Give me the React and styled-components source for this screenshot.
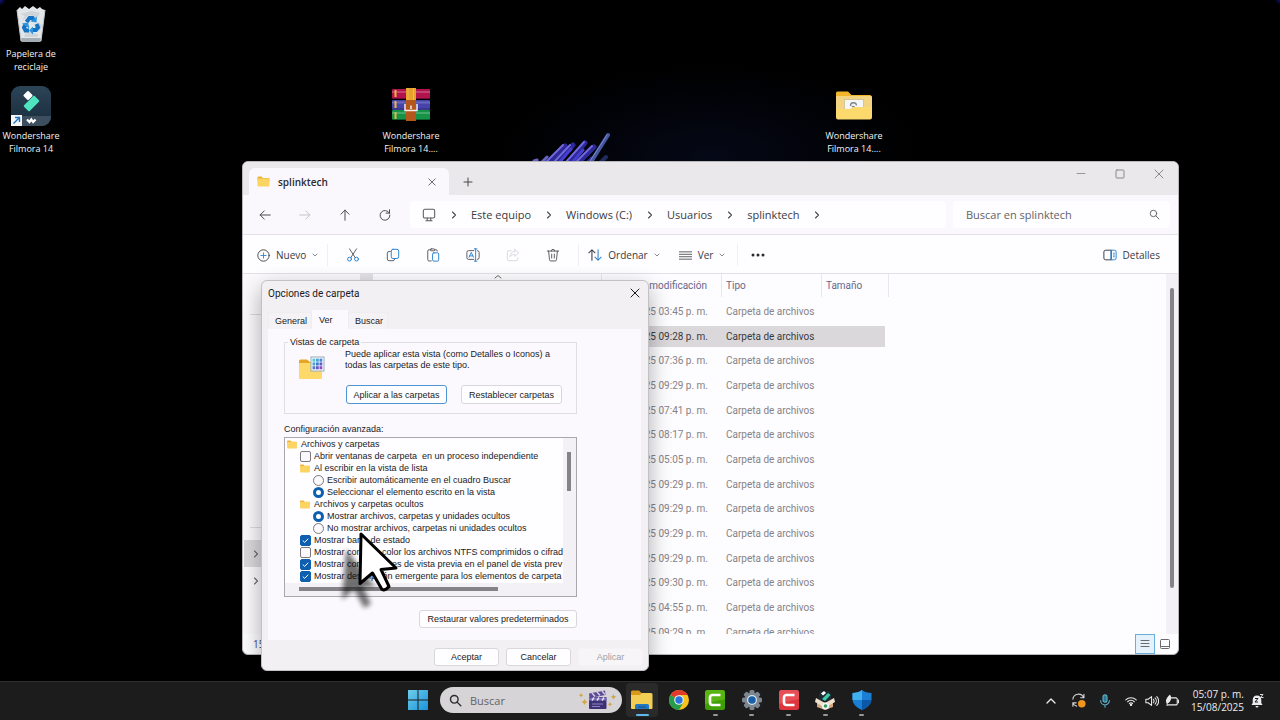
import React, { useState } from 'react';
import styled, { createGlobalStyle, css } from 'styled-components';

const ui = '"Open Sans", "Noto Sans", sans-serif';
const uiNarrow = 'Roboto, "Noto Sans", sans-serif';
const classic = '"Liberation Sans", Arial, sans-serif';

const GlobalStyle = createGlobalStyle`
  * {
    box-sizing: border-box;
  }
  body {
    margin: 0;
    background: #000;
    font-family: ${ui};
    overflow: hidden;
  }
  button, input {
    font-family: inherit;
  }
  svg {
    display: block;
    flex: none;
  }
`;

const Desktop = styled.div`
  position: relative;
  display: flex;
  flex-direction: column;
  height: 100vh;
  overflow: hidden;
  background:
    radial-gradient(circle at 0 0, #10107a 0, transparent 6px),
    radial-gradient(circle at 100% 0, #10107a 0, transparent 5px),
    radial-gradient(ellipse 210px 90px at 710px 155px, #050816 0, transparent 100%),
    #000;
`;

const Workspace = styled.main`
  position: relative;
  flex: 1;
`;

const Bloom = styled.svg`
  position: absolute;
  left: 528px;
  top: 130px;
`;

/* ---------- desktop icons ---------- */

const Shortcut = styled.a`
  position: absolute;
  left: ${(props) => props.$x}px;
  top: ${(props) => props.$y}px;
  width: 72px;
  display: flex;
  flex-direction: column;
  align-items: center;
  gap: ${(props) => props.$gap || 3}px;
  color: #f2f2f2;
  font-size: 9px;
  line-height: 13px;
  text-align: center;
  text-decoration: none;
`;

/* ---------- explorer window ---------- */

const Explorer = styled.section`
  position: absolute;
  left: 242px;
  right: 101px;
  top: 161px;
  bottom: 26px;
  display: flex;
  flex-direction: column;
  border: 1px solid #b9b7ba;
  border-radius: 6px;
  background: #fdfcfe;
  overflow: hidden;
`;

const TitleBar = styled.header`
  display: flex;
  height: 33px;
  padding: 6px 0 0 6px;
  background: #eae8eb;
`;

const ExplorerTab = styled.div`
  display: flex;
  align-items: center;
  width: 200px;
  padding: 0 11px 0 8px;
  gap: 8px;
  border-radius: 6px 6px 0 0;
  background: #faf8fc;
  color: #2b2a2d;
  font-size: 10px;
  font-weight: 600;
`;

const Spacer = styled.span`
  flex: 1;
`;

const PlainButton = styled.button`
  display: flex;
  align-items: center;
  justify-content: center;
  width: ${(props) => props.$w || 20}px;
  height: ${(props) => props.$h || 20}px;
  padding: 0;
  border: 0;
  background: none;
  color: ${(props) => props.$color || '#4a494c'};
`;

const NavBar = styled.nav`
  display: flex;
  align-items: center;
  height: 40px;
  padding: 0 8px 0 2px;
  border-bottom: 1px solid #e3e1e5;
  background: #faf8fc;
`;

const Address = styled.div`
  display: flex;
  align-items: center;
  flex: 1;
  height: 27px;
  margin-left: 5px;
  padding-left: 12px;
  border-radius: 4px;
  background: #fefdff;
  color: #5b5a5d;
`;

const Crumb = styled.a`
  color: #3b3a3d;
  font-size: 11px;
  line-height: 16px;
  text-decoration: none;
  white-space: nowrap;
`;

const CrumbGap = styled.span`
  display: flex;
  justify-content: center;
  width: 35px;
  color: #4a494c;
`;

const SearchBox = styled.label`
  display: flex;
  align-items: center;
  width: 217px;
  height: 27px;
  margin-left: 7px;
  padding: 0 10px 0 13px;
  border-radius: 4px;
  background: #fefdff;
  color: #5b5a5d;
`;

const SearchInput = styled.input`
  flex: 1;
  min-width: 0;
  padding: 0;
  border: 0;
  outline: 0;
  background: none;
  color: #5b5a5d;
  font-size: 11px;
  &::placeholder {
    color: #646366;
    opacity: 1;
  }
`;

const Toolbar = styled.div`
  display: flex;
  align-items: center;
  height: 39px;
  padding: 2px 14px 0 10px;
  border-bottom: 1px solid #e3e1e5;
  background: #fefdff;
`;

const ToolButton = styled.button`
  display: flex;
  align-items: center;
  gap: 6px;
  height: 24px;
  margin-left: ${(props) => props.$push || 0}px;
  padding: 0 4px;
  border: 0;
  background: none;
  color: #3b3a3d;
  font-size: 10px;
  white-space: nowrap;
`;

const IconTool = styled(ToolButton)`
  justify-content: center;
  width: ${(props) => props.$w || 40}px;
  padding: 0;
  color: #5b5a5d;
  &:disabled {
    color: #c9c8ce;
    opacity: 0.7;
  }
`;

const Divider = styled.span`
  width: 1px;
  height: 22px;
  margin: 0 ${(props) => props.$m}px;
  background: #f1eff3;
`;

const Body = styled.div`
  display: flex;
  flex: 1;
  min-height: 0;
`;

const Sidebar = styled.aside`
  display: flex;
  flex-direction: column;
  width: 130px;
  padding: 40px 0 0 1px;
  border-right: 13px solid #e4e2e5;
  background: #fbf9fc;
`;

const SidebarGroup = styled.div`
  height: 214px;
  margin: 0 6px;
  border-top: 1px solid #dddbde;
  border-bottom: 1px solid #dddbde;
`;

const TreeRow = styled.button`
  display: flex;
  align-items: center;
  height: 27px;
  margin-top: ${(props) => (props.$current ? 12 : 0)}px;
  padding: 0 8px;
  border: 0;
  background: ${(props) => (props.$current ? '#dad8db' : 'none')};
  color: #6b6a6d;
`;

const Files = styled.div`
  position: relative;
  flex: 1;
  min-width: 0;
  overflow: hidden;
`;

const SortMark = styled.span`
  position: absolute;
  left: 121px;
  top: -1px;
  color: #6b6a6d;
`;

const FileTable = styled.table`
  table-layout: fixed;
  width: 516px;
  border-collapse: separate;
  border-spacing: 0;
  font-family: ${uiNarrow};
  font-size: 10px;
  line-height: 12px;
`;

const HeadCell = styled.th`
  width: ${(props) => props.$w}px;
  height: 23px;
  padding: 0 4px;
  border-right: 1px solid #e9e7eb;
  color: #69678a;
  font-weight: 400;
  text-align: left;
  white-space: nowrap;
  &:nth-child(2) {
    padding: 0 14px 0 0;
    text-align: right;
  }
`;

const FileRow = styled.tr`
  height: 25px;
  color: ${(props) => (props.$selected ? '#3a393c' : '#858387')};
  &:nth-child(3n) {
    height: 24px;
  }
  td {
    padding: 0 4px;
    border-top: 2px solid transparent;
    border-bottom: 2px solid transparent;
    background: ${(props) => (props.$selected ? '#dad8db' : 'none')};
    background-clip: padding-box;
    white-space: nowrap;
  }
  td:nth-child(2) {
    padding-right: 14px;
    text-align: right;
  }
  td:last-child {
    border-right: 4px solid transparent;
  }
`;

const TableBody = styled.tbody`
  &::before {
    content: '';
    display: block;
    height: 2px;
  }
`;

const Track = styled.div`
  width: 12px;
  padding: 14px 4px;
  background: #f3f1f5;
`;

const Thumb = styled.div`
  width: 4px;
  height: 300px;
  border-radius: 2px;
  background: #858387;
`;

const StatusBar = styled.footer`
  display: flex;
  align-items: center;
  height: 20px;
  padding: 0 3px 0 10px;
  color: #4b4a70;
  font-size: 10px;
`;

const ViewToggle = styled.button`
  display: flex;
  align-items: center;
  justify-content: center;
  width: 20px;
  height: 20px;
  padding: 0;
  border: 1px solid ${(props) => (props.$active ? '#6aaede' : 'transparent')};
  background: ${(props) => (props.$active ? '#e5f2fc' : 'none')};
  color: #6b6a6d;
`;

/* ---------- folder options dialog ---------- */

const Dialog = styled.section`
  position: absolute;
  left: 261px;
  top: 280px;
  width: 388px;
  display: flex;
  flex-direction: column;
  border: 1px solid #c3c1c4;
  border-radius: 6px;
  background: #f2f0f3;
  box-shadow: 0 8px 22px rgba(0, 0, 0, 0.32);
  color: #1b1a1d;
  font-family: ${classic};
  font-size: 9px;
`;

const DialogTitle = styled.header`
  display: flex;
  align-items: center;
  justify-content: space-between;
  height: 24px;
  padding: 0 3px 0 6px;
  h2 {
    margin: 0;
    font-family: ${uiNarrow};
    font-size: 10px;
    font-weight: 400;
  }
`;

const Tabs = styled.div`
  display: flex;
  align-items: flex-end;
  height: 24px;
  padding: 0 6px;
`;

const Tab = styled.button`
  width: ${(props) => props.$w}px;
  height: ${(props) => (props.$active ? 19 : 17)}px;
  padding: 0 6px;
  border: 1px solid ${(props) => (props.$active ? '#fbf9fd' : '#efedf0')};
  border-bottom: 0;
  background: ${(props) => (props.$active ? '#fbf9fd' : '#f4f2f5')};
  color: inherit;
  font-size: 9px;
  text-align: left;
`;

const Page = styled.div`
  display: flex;
  flex-direction: column;
  height: 311px;
  margin: 0 7px 0 6px;
  padding: 7px 64px 12px 16px;
  background: #fbf9fd;
`;

const Group = styled.fieldset`
  display: flex;
  height: 78px;
  margin: 0;
  padding: 0 11px 0 13px;
  border: 1px solid #e0dee2;
  legend {
    height: 13px;
    margin-left: -10px;
    padding: 0 2px;
    line-height: 13px;
  }
`;

const GroupIcon = styled.div`
  width: 47px;
  padding-top: 7px;
`;

const GroupText = styled.p`
  margin: 0 0 14px;
  line-height: 11px;
`;

const Row = styled.div`
  display: flex;
  justify-content: ${(props) => (props.$end ? 'flex-end' : 'flex-start')};
  gap: 14px;
  padding-left: 1px;
`;

const Button = styled.button`
  width: ${(props) => props.$w}px;
  height: ${(props) => props.$h || 18}px;
  padding: 0;
  border: 1px solid ${(props) => (props.$focus ? '#4f94d4' : '#d9d7da')};
  border-radius: 3px;
  background: #fefdff;
  color: inherit;
  font-size: 9px;
  white-space: nowrap;
  &:disabled {
    border-color: #f4f2f5;
    background: #f7f5f8;
    color: #a2a0a4;
  }
`;

const ListLabel = styled.span`
  margin: 9px 0 2px;
  line-height: 12px;
`;

const List = styled.div`
  display: grid;
  grid-template-columns: 1fr 13px;
  grid-template-rows: 145px 13px;
  border: 1px solid #a9a7ab;
  background: #f3f1f5;
`;

const Options = styled.div`
  overflow: hidden;
  background: #fefdff;
`;

const Option = styled.label`
  display: flex;
  align-items: center;
  gap: 3px;
  height: 12px;
  padding-left: ${(props) => 1 + props.$level * 13}px;
  white-space: pre;
`;

const mark = css`
  appearance: none;
  flex: none;
  width: 11px;
  height: 11px;
  margin: 0 0 0 1px;
  border: 1px solid #7b797d;
  background: #fbf9fd;
`;

const Tick = styled.input`
  ${mark}
  border-radius: 2px;
  &:checked {
    border-color: #0f5fb0;
    background: #0f5fb0 url("data:image/svg+xml,%3Csvg xmlns='http://www.w3.org/2000/svg' viewBox='0 0 9 9' fill='none' stroke='white'%3E%3Cpath d='M1.8 4.6l1.9 1.8 3.5-3.7'/%3E%3C/svg%3E");
  }
`;

const Radio = styled.input`
  ${mark}
  border-radius: 50%;
  &:checked {
    border: 3px solid #0f5fb0;
    background: #fff;
  }
`;

const ListBar = styled.div`
  padding: ${(props) => (props.$flat ? '4px 0 0 14px' : '14px 0 0 4px')};
  &::after {
    content: '';
    display: block;
    width: ${(props) => (props.$flat ? 199 : 4)}px;
    height: ${(props) => (props.$flat ? 4 : 39)}px;
    background: #858387;
  }
`;

const DialogButtons = styled.div`
  display: flex;
  justify-content: flex-end;
  gap: 7px;
  padding: 8px 5px 4px;
`;

const Pointer = styled.svg`
  position: absolute;
  left: 329px;
  top: 525px;
  pointer-events: none;
`;

/* ---------- taskbar ---------- */

const Taskbar = styled.footer`
  position: relative;
  display: grid;
  grid-template-columns: 1fr auto 1fr;
  align-items: start;
  height: 39px;
  border-top: 1px solid #303032;
  background: #1c1c1d;
`;

const TaskCenter = styled.div`
  grid-column: 2;
  display: flex;
  align-items: center;
  height: 36px;
`;

const TaskSearch = styled.label`
  display: flex;
  align-items: center;
  gap: 8px;
  width: 182px;
  height: 26px;
  margin: 0 4px 0 6px;
  padding: 0 5px 0 9px;
  border-radius: 13px;
  background: #d6d4d7;
  color: #2c2b2e;
`;

const Apps = styled.div`
  display: flex;
  justify-content: space-between;
  width: 252px;
`;

const AppButton = styled.button`
  position: relative;
  display: flex;
  align-items: center;
  justify-content: center;
  width: 32px;
  height: 34px;
  padding: 0;
  border: 0;
  border-radius: 4px;
  background: ${(props) => (props.$active ? '#2a2a2b' : 'none')};
  &::after {
    content: '';
    position: absolute;
    bottom: 1px;
    width: ${(props) => (props.$active ? 13 : 5)}px;
    height: 2px;
    border-radius: 1px;
    background: ${(props) => (props.$active ? '#5db8ea' : '#98969a')};
    display: ${(props) => (props.$idle ? 'none' : 'block')};
  }
`;

const Tray = styled.div`
  display: flex;
  align-items: center;
  justify-content: flex-end;
  height: 37px;
  padding-right: 15px;
  color: #ececee;
`;

const Clock = styled.time`
  width: 60px;
  margin-right: 5px;
  font-size: 10px;
  line-height: 13px;
  text-align: right;
`;

/* ---------- drawings ---------- */

const Line = ({ w = 12, h = w, vb = '0 0 16 16', sw = 1.3, children }) => (
  <svg width={w} height={h} viewBox={vb} fill="none" stroke="currentColor" strokeWidth={sw} strokeLinecap="round" strokeLinejoin="round">
    {children}
  </svg>
);

const Close = ({ s = 9 }) => <Line w={s} vb="0 0 10 10" sw={1}><path d="M1 1l8 8M9 1L1 9" /></Line>;
const Chevron = () => <Line w={8} vb="0 0 8 8" sw={1.1}><path d="M2.5 1l3 3-3 3" /></Line>;
const Down = () => <Line w={6} vb="0 0 6 6" sw={0.6}><path d="M1 2l2 2 2-2" /></Line>;
const Lens = ({ s = 12, sw = 1.3 }) => <Line w={s} sw={sw}><circle cx="6.5" cy="6.5" r="4.7" /><path d="M10 10l4.5 4.5" /></Line>;

const Folder = ({ w = 13, h = 11 }) => (
  <svg width={w} height={h} viewBox="0 0 26 22">
    <path d="M1 3a2 2 0 0 1 2-2h6l3 3h11a2 2 0 0 1 2 2v4H1z" fill="#e9b33c" />
    <rect x="1" y="5" width="24" height="16" rx="2" fill="#fbd462" />
  </svg>
);

const RecycleBin = () => (
  <svg width="32" height="39" viewBox="0 0 32 39">
    <path d="M2 5l3-3 2 2 3-3 4 3 4-3 4 3 3-2 2 2 3 1-4 31H6z" fill="#e3e6e9" />
    <path d="M2 5l4 31h20l4-31" fill="none" stroke="#c3c9ce" />
    <path d="M6 33h20l-1 4H7z" fill="#a5adb4" />
    <path d="M5 9l5 2-3 5 7-6 8 3 3-5-8-2zM9 30l6-4 9 4-2 2H10zM23 17l4 3-2 6-4-3z" fill="#cfd4d8" />
    <g fill="none" stroke="#1473c4" strokeWidth="4">
      <path d="M11.500 17l3-4h3l1.500 2.500" />
      <path d="M21.500 19l1.500 3.500-2 2.500h-3.500" />
      <path d="M14 25.500h-3.500L9 22.500l1.500-3" />
    </g>
    <path d="M15.500 16.500l6 1 .500-6zM18 21.500l-4 4 4 4zM7 18.500l6-1 1.500 6z" fill="#2b95e0" />
  </svg>
);

const Filmora = () => (
  <svg width="40" height="40" viewBox="0 0 40 40">
    <defs>
      <linearGradient id="fil" x1="0" y1="0" x2="0" y2="1"><stop offset="0" stopColor="#2d4457" /><stop offset="1" stopColor="#172b3b" /></linearGradient>
    </defs>
    <rect width="40" height="40" rx="9" fill="url(#fil)" />
    <path d="M0 30h40v1a9 9 0 0 1-9 9H9a9 9 0 0 1-9-9z" fill="#3d4f5e" />
    <rect x="-3.500" y="-3.500" width="7" height="7" rx="1" transform="translate(17 9.500) rotate(45)" fill="#fff" />
    <rect x="-7.500" y="-4" width="15" height="8" rx="1" transform="translate(20.500 17.500) rotate(-45)" fill="#4fe3c0" />
    <path d="M16 33.500l2.500 2.500 1.800-2.500 1.800 2.500 2.500-2.500" fill="none" stroke="#fff" strokeWidth="2.200" />
    <rect y="29" width="11" height="11" fill="#f4f6f8" />
    <path d="M2.500 37.500l6-6M4 31.500h4.500V36" fill="none" stroke="#1b74c5" strokeWidth="1.400" />
  </svg>
);

const Rar = () => (
  <svg width="40" height="33" viewBox="0 0 40 33">
    <rect x="1" y="1" width="38" height="10" rx="1" fill="#b3134d" />
    <rect x="1" y="12" width="38" height="10" rx="1" fill="#4644ab" />
    <rect x="1" y="22" width="38" height="10" rx="1" fill="#159346" />
    <path d="M1 4h38M1 14.500h38M1 25h38" stroke="#fff" strokeOpacity=".2" strokeWidth="2" />
    <path d="M1 10.500h38M1 21h38M1 31.500h38" stroke="#000" strokeOpacity=".35" />
    <path d="M4.500 2v7M4.500 13v7M4.500 24v7" stroke="#e9b83a" strokeWidth="2" />
    <rect x="15" y="0" width="10" height="13" fill="#e7a22b" />
    <rect x="15" y="12" width="10" height="21" fill="#b4571c" />
    <path d="M17 0v12M22.500 0v12" stroke="#f6cf62" strokeOpacity=".6" />
    <path d="M14 16v6.500h12V16" fill="none" stroke="#f2eeee" strokeWidth="1.500" />
    <path d="M20 17.500v3.500" stroke="#f2eeee" strokeWidth="1.500" />
  </svg>
);

const DesktopFolder = () => (
  <svg width="36" height="29" viewBox="0 0 36 29">
    <path d="M0 2a1.500 1.500 0 0 1 1.500-1.500H12L15.500 4H34a1.500 1.500 0 0 1 1.500 1.500V20H0z" fill="#f3b62b" />
    <rect y="5" width="36" height="16" rx="1" fill="#f3d480" />
    <rect x="8.500" y="8.500" width="19" height="12" fill="#f6f6f6" stroke="#c8b98c" strokeWidth=".7" />
    <path d="M14.500 15a3 3 0 0 1 6-.500M16 16a1.500 1.500 0 0 1 2.500 0" fill="none" stroke="#7b8690" strokeWidth="1.300" />
    <path d="M0 18l14 0 3-2h19v10.500a2 2 0 0 1-2 2H2a2 2 0 0 1-2-2z" fill="#fcd96d" />
  </svg>
);

const FolderView = () => (
  <svg width="27" height="24" viewBox="0 0 27 24">
    <path d="M1 5a1.500 1.500 0 0 1 1.500-1.500H9L12 6h11v6H1z" fill="#e5a525" />
    <rect x="1" y="7" width="23" height="16" rx="1" fill="#fcd968" />
    <rect x="13" y="1" width="13" height="14" fill="#fafcff" stroke="#9aaab8" />
    {[0, 1, 2].map((r) => [0, 1, 2].map((c) => (
      <rect key={`${r}${c}`} x={14.5 + c * 3.5} y={2.6 + r * 3.8} width="2.800" height="3.100" fill={[['#5ec3d0', '#48a3da', '#4a86d8'], ['#46a6d6', '#4577cf', '#5a5cc8'], ['#4a7fd0', '#6a57c4', '#8a4ebc']][r][c]} />
    )))}
  </svg>
);

const Streaks = () => (
  <Bloom width="90" height="32" viewBox="0 0 90 32" fill="none" strokeLinecap="round" aria-hidden="true">
    <path d="M6 31l3-1M14 32l5-5" stroke="#6764c2" strokeWidth="3" />
    <path d="M20 33l17-17M28 33l17-18M40 33l17-20M50 33l16-16M60 33l4-4" stroke="#2d2898" strokeWidth="5" />
    <path d="M17 33l18-18M25 33l17-18M37 33l19-21M47 33l17-17" stroke="#7168dc" strokeWidth="2" />
    <path d="M31 33l12-14M44 33l11-13" stroke="#463ed0" strokeWidth="3" />
    <path d="M63 32L80 5" stroke="#4658a2" strokeWidth="4" />
    <path d="M62 31L79 5" stroke="#7a8bcc" strokeWidth="1" />
    <path d="M72 33l6-6" stroke="#222b5e" strokeWidth="4" />
  </Bloom>
);

const blue = '#2a83cf';

const Camtasia = ({ color, top }) => (
  <svg width="20" height="20" viewBox="0 0 20 20">
    <rect width="20" height="20" rx="2.500" fill={color} />
    <path d="M0 2.500A2.500 2.500 0 0 1 2.500 0h15A2.500 2.500 0 0 1 20 2.500V9L0 14z" fill={top} opacity=".5" />
    <path d="M15.500 5H7.500A2.500 2.500 0 0 0 5 7.500v5A2.500 2.500 0 0 0 7.500 15h8" fill="none" stroke="#fff" strokeWidth="2.600" />
  </svg>
);

const apps = [
  { name: 'Explorador de archivos', active: true, icon: (
    <svg width="22" height="20" viewBox="0 0 22 20">
      <path d="M0 2a1.500 1.500 0 0 1 1.500-1.500H8L10.500 3H20v5H0z" fill="#d99a1c" />
      <path d="M0 5h9l2-2h9a1.500 1.500 0 0 1 1.500 1.500V18a1 1 0 0 1-1 1H1a1 1 0 0 1-1-1z" fill="#f3ce55" />
      <path d="M4 19v-3.500A1.500 1.500 0 0 1 5.500 14h11a1.500 1.500 0 0 1 1.500 1.500V19z" fill="#2478c2" />
      <path d="M7 17h8" stroke="#164f8c" />
    </svg>
  ) },
  { name: 'Chrome', idle: true, icon: (
    <svg width="20" height="20" viewBox="0 0 20 20">
      <circle cx="10" cy="10" r="10" fill="#f9c31d" />
      <path d="M10 10L1.340 5A10 10 0 0 1 18.660 5H10z" fill="#e23b2e" />
      <path d="M1.340 5A10 10 0 0 0 10 20l4.330-7.500L10 10z" fill="#279c4a" />
      <circle cx="10" cy="10" r="4.800" fill="#f2f4f6" />
      <circle cx="10" cy="10" r="3.700" fill="#2a73df" />
    </svg>
  ) },
  { name: 'Camtasia', icon: <Camtasia color="#3f9f06" top="#76cc1d" /> },
  { name: 'Configuración', icon: (
    <svg width="20" height="20" viewBox="0 0 20 20">
      <g fill="#7d8791">
        {[0, 45, 90, 135].map((a) => <rect key={a} x="7.500" y="0" width="5" height="20" rx="1.500" transform={`rotate(${a} 10 10)`} />)}
        <circle cx="10" cy="10" r="7.500" />
      </g>
      <circle cx="10" cy="10" r="5" fill="#dfe5ea" />
      <circle cx="10" cy="10" r="3.800" fill="#1860a8" />
    </svg>
  ) },
  { name: 'Camtasia Recorder', icon: <Camtasia color="#de343e" top="#f2686c" /> },
  { name: 'Instalador de Filmora', icon: (
    <svg width="20" height="20" viewBox="0 0 20 20">
      <path d="M5 1h9l2 3v7H4V4z" fill="#1c2b36" />
      <path d="M6 3.500l3-2.500 2 2-3 2.500z" fill="#fff" />
      <path d="M7 9l6-6 2.500 2L10 11z" fill="#3fc9a4" />
      <path d="M2 10l8 3 8-3v7l-8 3-8-3z" fill="#d3a77f" />
      <path d="M1 8l9 5-3 3-7-4zM19 8l-9 5 3 3 7-4z" fill="#f0dfcc" />
      <circle cx="10.500" cy="16" r="3.600" fill="#f0f5f2" />
      <circle cx="10.500" cy="16" r="1.800" fill="#2f9a62" />
    </svg>
  ) },
  { name: 'Seguridad de Windows', icon: (
    <svg width="20" height="20" viewBox="0 0 20 20">
      <path d="M10 0c3 2.200 6 3 9.500 3v6c0 5-4 8.500-9.500 11C4.500 17.500.500 14 .500 9V3C4 3 7 2.200 10 0z" fill="#1a7fd4" />
      <path d="M10 0v10H.500V3C4 3 7 2.200 10 0z" fill="#42b0ee" />
      <path d="M10 10h9.400c-.300 4.500-4.200 7.700-9.400 10z" fill="#0d58a6" />
    </svg>
  ) },
];

const dates = ['03:45', '09:28', '07:36', '09:29', '07:41', '08:17', '05:05', '09:29', '09:29', '09:29', '09:29', '09:30', '04:55', '09:29'];

const options = [
  { type: 'folder', level: 0, text: 'Archivos y carpetas' },
  { type: 'check', level: 1, text: 'Abrir ventanas de carpeta  en un proceso independiente' },
  { type: 'folder', level: 1, text: 'Al escribir en la vista de lista' },
  { type: 'radio', level: 2, group: 'typing', text: 'Escribir automáticamente en el cuadro Buscar' },
  { type: 'radio', level: 2, group: 'typing', on: true, text: 'Seleccionar el elemento escrito en la vista' },
  { type: 'folder', level: 1, text: 'Archivos y carpetas ocultos' },
  { type: 'radio', level: 2, group: 'hidden', on: true, text: 'Mostrar archivos, carpetas y unidades ocultos' },
  { type: 'radio', level: 2, group: 'hidden', text: 'No mostrar archivos, carpetas ni unidades ocultos' },
  { type: 'check', level: 1, on: true, text: 'Mostrar barra de estado' },
  { type: 'check', level: 1, text: 'Mostrar con otro color los archivos NTFS comprimidos o cifrad' },
  { type: 'check', level: 1, on: true, text: 'Mostrar controladores de vista previa en el panel de vista prev' },
  { type: 'check', level: 1, on: true, text: 'Mostrar descripción emergente para los elementos de carpeta' },
];

const FolderOptions = () => {
  const [tab, setTab] = useState('Ver');
  return (
    <Dialog role="dialog" aria-label="Opciones de carpeta">
      <DialogTitle>
        <h2>Opciones de carpeta</h2>
        <PlainButton $color="#1b1a1d" aria-label="Cerrar"><Close s={10} /></PlainButton>
      </DialogTitle>
      <Tabs>
        {[['General', 44], ['Ver', 36], ['Buscar', 40]].map(([name, w]) => (
          <Tab key={name} $w={w} $active={tab === name} onClick={() => setTab(name)}>{name}</Tab>
        ))}
      </Tabs>
      <Page>
        <Group>
          <legend>Vistas de carpeta</legend>
          <GroupIcon><FolderView /></GroupIcon>
          <div>
            <GroupText>
              Puede aplicar esta vista (como Detalles o Iconos) a<br />todas las carpetas de este tipo.
            </GroupText>
            <Row>
              <Button $w={101} $h={19} $focus>Aplicar a las carpetas</Button>
              <Button $w={101} $h={19}>Restablecer carpetas</Button>
            </Row>
          </div>
        </Group>
        <ListLabel>Configuración avanzada:</ListLabel>
        <List>
          <Options>
            {options.map((o) => (
              <Option key={o.text} as={o.type === 'folder' ? 'div' : 'label'} $level={o.level}>
                {o.type === 'folder' && <Folder w={12} h={9} />}
                {o.type === 'check' && <Tick type="checkbox" defaultChecked={o.on} />}
                {o.type === 'radio' && <Radio type="radio" name={o.group} defaultChecked={o.on} />}
                {o.text}
              </Option>
            ))}
          </Options>
          <ListBar />
          <ListBar $flat />
        </List>
        <Spacer />
        <Row $end>
          <Button $w={158}>Restaurar valores predeterminados</Button>
        </Row>
      </Page>
      <DialogButtons>
        <Button $w={65}>Aceptar</Button>
        <Button $w={65}>Cancelar</Button>
        <Button $w={65} disabled>Aplicar</Button>
      </DialogButtons>
    </Dialog>
  );
};

const ExplorerWindow = () => (
  <Explorer>
    <TitleBar>
      <ExplorerTab>
        <Folder />
        splinktech
        <Spacer />
        <PlainButton $w={12} aria-label="Cerrar pestaña"><Close s={8} /></PlainButton>
      </ExplorerTab>
      <PlainButton $w={38} $h={27} aria-label="Nueva pestaña"><Line w={10} vb="0 0 10 10" sw={1}><path d="M5 1v8M1 5h8" /></Line></PlainButton>
      <Spacer />
      <PlainButton $w={39} $h={12} $color="#9a989c" aria-label="Minimizar"><Line w={10} vb="0 0 10 10" sw={1}><path d="M1 4.500h8" /></Line></PlainButton>
      <PlainButton $w={39} $h={12} $color="#8a888c" aria-label="Maximizar"><Line w={10} vb="0 0 10 10" sw={1}><rect x="1" y="1" width="8" height="8" rx="1" /></Line></PlainButton>
      <PlainButton $w={39} $h={12} $color="#8a888c" aria-label="Cerrar"><Close s={10} /></PlainButton>
    </TitleBar>
    <NavBar>
      <PlainButton $w={40} aria-label="Atrás"><Line><path d="M15 8H1.500M7 2.500L1.500 8 7 13.500" /></Line></PlainButton>
      <PlainButton $w={40} $color="#c4c2c6" aria-label="Adelante"><Line><path d="M1 8h13.500M9 2.500L14.500 8 9 13.500" /></Line></PlainButton>
      <PlainButton $w={40} aria-label="Subir"><Line><path d="M8 15V1.500M2.500 7L8 1.500 13.500 7" /></Line></PlainButton>
      <PlainButton $w={40} aria-label="Actualizar"><Line><path d="M13.800 5.500A6.500 6.500 0 1 0 14.500 8M14 1v4.500H9.500" /></Line></PlainButton>
      <Address>
        <Line w={14} vb="0 0 16 16" sw={1.2}><rect x="1.500" y="1.500" width="13" height="10" rx="1.800" /><path d="M6 11.500v3M10 11.500v3M4.500 14.500h7" /></Line>
        <CrumbGap><Chevron /></CrumbGap>
        <Crumb href="#equipo">Este equipo</Crumb>
        <CrumbGap><Chevron /></CrumbGap>
        <Crumb href="#c">Windows (C:)</Crumb>
        <CrumbGap><Chevron /></CrumbGap>
        <Crumb href="#usuarios">Usuarios</Crumb>
        <CrumbGap><Chevron /></CrumbGap>
        <Crumb href="#splinktech">splinktech</Crumb>
        <CrumbGap><Chevron /></CrumbGap>
      </Address>
      <SearchBox>
        <SearchInput placeholder="Buscar en splinktech" aria-label="Buscar en splinktech" />
        <Lens s={11} />
      </SearchBox>
    </NavBar>
    <Toolbar>
      <ToolButton>
        <Line w={13} sw={1.1}><circle cx="8" cy="8" r="7" /><path d="M8 4.800v6.400M4.800 8h6.400" stroke={blue} /></Line>
        Nuevo
        <Down />
      </ToolButton>
      <Divider $m={5} />
      <IconTool aria-label="Cortar">
        <Line w={14} sw={1.1}><path d="M4 1l6.500 10M12 1L5.500 11" /><circle cx="4" cy="12.700" r="2.200" stroke={blue} /><circle cx="12" cy="12.700" r="2.200" stroke={blue} /></Line>
      </IconTool>
      <IconTool aria-label="Copiar">
        <Line w={14} sw={1.1}><path d="M5 4H3.500A2 2 0 0 0 1.500 6v6.500a2 2 0 0 0 2 2H8a2 2 0 0 0 1.800-1.500" /><rect x="6" y="1.500" width="8.500" height="10.500" rx="2" stroke={blue} /></Line>
      </IconTool>
      <IconTool aria-label="Pegar">
        <Line w={14} sw={1.1}><path d="M6 14.800H3.500a1.500 1.500 0 0 1-1.500-1.500V3.500A1.500 1.500 0 0 1 3.500 2H5M10 2h1.500A1.500 1.500 0 0 1 13 3.500" /><rect x="5" y="1" width="5" height="2.200" rx="1" /><rect x="7.500" y="5.500" width="7" height="9.500" rx="1.500" stroke={blue} /></Line>
      </IconTool>
      <IconTool aria-label="Cambiar nombre">
        <Line w={14} sw={1.1}><path d="M9 3H3a2 2 0 0 0-2 2v6a2 2 0 0 0 2 2h6M13 3a2 2 0 0 1 2 2v6a2 2 0 0 1-2 2" /><path d="M3.500 10.500L6 5l2.500 5.500M4.300 9h3.400M11 1v14M9.500 1h3M9.500 15h3" stroke={blue} /></Line>
      </IconTool>
      <IconTool aria-label="Compartir" disabled>
        <Line w={14} sw={1.1}><path d="M6 3H3.500a2 2 0 0 0-2 2v7.500a2 2 0 0 0 2 2h8a2 2 0 0 0 2-2V11" /><path d="M10 1.500l4.500 4L10 9.500V7.300C7.500 7.300 6 8 4.500 10c.300-3.500 2-6 5.500-6.200z" /></Line>
      </IconTool>
      <IconTool aria-label="Eliminar">
        <Line w={14} sw={1.1}><path d="M1.500 3.500h13M6 3.500a2 2 0 0 1 4 0M3 3.500l1 10a1.500 1.500 0 0 0 1.500 1.300h5A1.500 1.500 0 0 0 12 13.500l1-10M6.500 7v4.500M9.500 7v4.500" /></Line>
      </IconTool>
      <Divider $m={5} />
      <ToolButton>
        <Line w={14} sw={1.2}><path d="M4.500 14V2M1 5.500L4.500 2 8 5.500" /><path d="M11.500 2v12M8 10.500l3.500 3.500 3.500-3.500" stroke={blue} /></Line>
        Ordenar
        <Down />
      </ToolButton>
      <ToolButton $push={11}>
        <Line w={13} sw={1}><path d="M0 3.500h16M0 6.500h16M0 9.500h16M0 12.500h16" /></Line>
        Ver
        <Down />
      </ToolButton>
      <Divider $m={8} />
      <IconTool $w={24} aria-label="Más"><svg width="16" height="4" fill="#2b2a2d"><circle cx="3" cy="2" r="1.500" /><circle cx="8" cy="2" r="1.500" /><circle cx="13" cy="2" r="1.500" /></svg></IconTool>
      <Spacer />
      <ToolButton>
        <Line w={14} sw={1.1}><path d="M9 13.500H3a2 2 0 0 1-2-2v-7a2 2 0 0 1 2-2h6z" /><path d="M9.500 2.500H13a2 2 0 0 1 2 2v7a2 2 0 0 1-2 2H9.500zM12 6h1M12 8h1M12 10h1" stroke={blue} /></Line>
        Detalles
      </ToolButton>
    </Toolbar>
    <Body>
      <Sidebar>
        <SidebarGroup />
        <TreeRow $current aria-label="Este equipo"><Chevron /></TreeRow>
        <TreeRow aria-label="Red"><Chevron /></TreeRow>
      </Sidebar>
      <Files>
        <SortMark><Line w={8} vb="0 0 8 8" sw={1}><path d="M1 5l3-2.500L7 5" /></Line></SortMark>
        <FileTable>
          <thead>
            <tr>
              <HeadCell $w={229} aria-label="Nombre" />
              <HeadCell $w={120}>modificación</HeadCell>
              <HeadCell $w={100}>Tipo</HeadCell>
              <HeadCell $w={67}>Tamaño</HeadCell>
            </tr>
          </thead>
          <TableBody>
            {dates.map((time, i) => (
              <FileRow key={i} $selected={i === 1}>
                <td />
                <td>25 {time} p. m.</td>
                <td>Carpeta de archivos</td>
                <td />
              </FileRow>
            ))}
          </TableBody>
        </FileTable>
      </Files>
      <Track><Thumb /></Track>
    </Body>
    <StatusBar>
      15
      <Spacer />
      <ViewToggle $active aria-label="Detalles"><Line w={10} vb="0 0 10 10" sw={1}><path d="M1 1.500h8M1 4.500h8M1 7.500h8" /></Line></ViewToggle>
      <ViewToggle aria-label="Miniaturas"><Line w={10} vb="0 0 10 10" sw={1}><rect x=".5" y=".5" width="9" height="9" rx="1" /><path d="M1 7.500h8" /></Line></ViewToggle>
    </StatusBar>
  </Explorer>
);

const Clapper = () => (
  <svg width="38" height="20" viewBox="0 0 38 20">
    <path d="M10 3.500l16-3 .600 4.500-16 3z" fill="#5a4a92" />
    <path d="M13 3l3 3.500M18 2l3 3.500M23 1l3 3.500" stroke="#cfc8ea" strokeWidth="1.500" />
    <rect x="10" y="7" width="17.500" height="12" rx="1" fill="#3d3274" />
    <path d="M10 7.500h17.500v3H10z" fill="#7c6bb8" />
    <path d="M13 10.500l2-3M18 10.500l2-3M23 10.500l2-3" stroke="#e4def6" strokeWidth="1.500" />
    <path d="M13 14h11M13 16.500h8" stroke="#8f80c4" />
    <g fill="#d3a33f">
      <path d="M2 3l.700 1.600 1.600.700-1.600.700L2 7.600 1.300 6-.300 5.300l1.600-.700zM5.500 9l1 2 2 1-2 1-1 2-1-2-2-1 2-1zM34.500 4l.900 1.900 2 .900-2 .900-.900 2-.900-2-2-.900 2-.900zM31 12l.700 1.500 1.500.700-1.500.700-.700 1.500-.700-1.500-1.500-.700 1.500-.700z" />
    </g>
  </svg>
);

const App = () => (
  <>
    <GlobalStyle />
    <Desktop>
      <Workspace>
        <Streaks />
        <Shortcut href="#papelera" $x={-5} $y={5}><RecycleBin /><span>Papelera de<br />reciclaje</span></Shortcut>
        <Shortcut href="#filmora" $x={-5} $y={86}><Filmora /><span>Wondershare<br />Filmora 14</span></Shortcut>
        <Shortcut href="#rar" $x={375} $y={88} $gap={8}><Rar /><span>Wondershare<br />Filmora 14....</span></Shortcut>
        <Shortcut href="#carpeta" $x={818} $y={91} $gap={9}><DesktopFolder /><span>Wondershare<br />Filmora 14....</span></Shortcut>
        <ExplorerWindow />
        <FolderOptions />
        <Pointer width="75" height="90" viewBox="0 0 75 90" aria-hidden="true">
          <defs><filter id="soft" x="-30%" y="-30%" width="160%" height="160%"><feGaussianBlur stdDeviation="2.800" /></filter></defs>
          <path d="M17 24l-4 51 12-11 10 19 7-4-8-17h12z" fill="#000" opacity=".55" filter="url(#soft)" />
          <path d="M32 9L31 58.500l12.500-10.500L53 64.500q3 1.500 7-3L52 44.500l15-1.500z" fill="#fff" stroke="#000" strokeWidth="3" strokeLinejoin="round" />
        </Pointer>
      </Workspace>
      <Taskbar>
        <TaskCenter>
          <PlainButton $w={32} $h={34} aria-label="Inicio">
            <svg width="20" height="20" viewBox="0 0 20 20">
              <defs><linearGradient id="win" x1="0" y1="0" x2="1" y2="1"><stop offset="0" stopColor="#6fcdea" /><stop offset="1" stopColor="#1a93dc" /></linearGradient></defs>
              <path d="M0 0h9.500v9.500H0zM10.500 0H20v9.500h-9.500zM0 10.500h9.500V20H0zM10.500 10.500H20V20h-9.500z" fill="url(#win)" />
            </svg>
          </PlainButton>
          <TaskSearch>
            <Lens s={13} sw={1.7} />
            <SearchInput placeholder="Buscar" aria-label="Buscar" />
            <Clapper />
          </TaskSearch>
          <Apps>
            {apps.map((a) => <AppButton key={a.name} aria-label={a.name} $active={a.active} $idle={a.idle}>{a.icon}</AppButton>)}
          </Apps>
        </TaskCenter>
        <Tray>
          <PlainButton $w={26} $color="#ececee" aria-label="Iconos ocultos"><Line w={10} vb="0 0 10 10" sw={1.3}><path d="M1 7l4-4 4 4" /></Line></PlainButton>
          <PlainButton $w={28} $color="#d5d4d8" aria-label="Actualizaciones">
            <Line w={15} sw={1.2}><path d="M2 6.500A6 6 0 0 1 13.500 5M13.800 1.500V5h-3.500M2 10.500a6 6 0 0 0 4 3.500M2 14v-3.500h3.500" /><circle cx="11.500" cy="11.500" r="4" fill="#f2951c" stroke="none" /></Line>
          </PlainButton>
          <PlainButton $w={26} $color="#63b3cf" aria-label="Micrófono">
            <Line w={14} sw={1.2}><rect x="5.700" y="1" width="4.600" height="8.500" rx="2.300" fill="#2d7690" /><path d="M3 7.500a5 5 0 0 0 10 0M8 12.500V15" /></Line>
          </PlainButton>
          <PlainButton $w={26} $color="#ececee" aria-label="Red">
            <Line w={12} sw={1.4}><path d="M1 6.500a10 10 0 0 1 14 0M3.500 9a6.500 6.500 0 0 1 9 0M5.800 11.300a3.200 3.200 0 0 1 4.400 0" /><circle cx="8" cy="13" r="1" fill="currentColor" /></Line>
          </PlainButton>
          <PlainButton $w={16} $color="#ececee" aria-label="Volumen">
            <Line w={14} sw={1.2}><path d="M1 6v4h2.500L7.500 13V3L3.500 6zM9.500 6a3 3 0 0 1 0 4M11.500 4.500a5 5 0 0 1 0 7M13.500 3a7 7 0 0 1 0 10" /></Line>
          </PlainButton>
          <PlainButton $w={24} $color="#ececee" aria-label="Batería">
            <Line w={14} sw={1.3}><path d="M7 4.500h5.500a1.500 1.500 0 0 1 1.500 1.500v5a1.500 1.500 0 0 1-1.500 1.500H4M15.500 7v3" /><path d="M2 9.500c-1-3 1-5.500 3.500-8C7 4 6.500 7.500 4 9.500zM2.500 9.500V13" fill="currentColor" /></Line>
          </PlainButton>
          <Clock>05:07 p. m.<br />15/08/2025</Clock>
          <PlainButton $w={16} $color="#ececee" aria-label="Notificaciones">
            <svg width="13" height="14" viewBox="0 0 13 14"><path d="M6 1.500c-2.800 0-4.300 2-4.300 4.500V9L.5 11h11l-1.200-2V6c0-2.500-1.500-4.500-4.300-4.500z" fill="#ececee" /><path d="M4.500 12h3a1.500 1.500 0 0 1-3 0z" fill="#ececee" /><path d="M4 4.500h3L4 8h3" fill="none" stroke="#1c1c1d" strokeWidth="1" /><path d="M9 .5h3L9.500 3.500h3" fill="none" stroke="#ececee" strokeWidth=".9" /></svg>
          </PlainButton>
        </Tray>
      </Taskbar>
    </Desktop>
  </>
);

export default App;
